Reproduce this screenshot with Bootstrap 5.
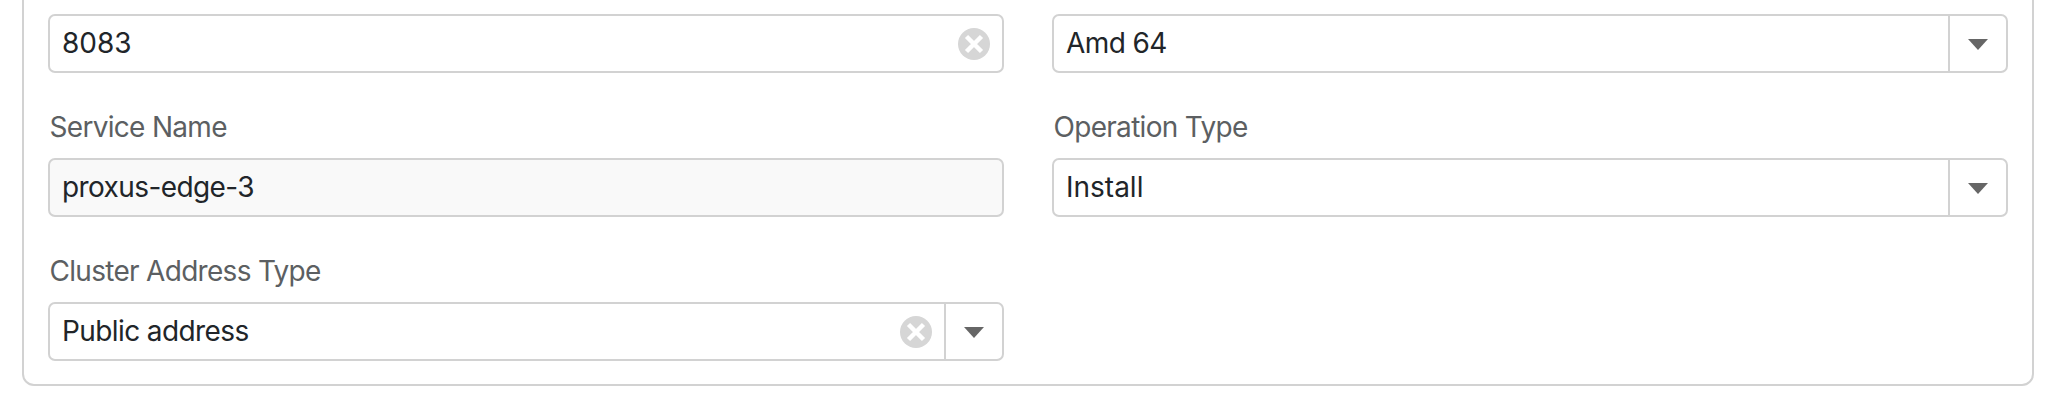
<!DOCTYPE html>
<html lang="en">
<head>
<meta charset="utf-8">
<title>Service form</title>
<link href="https://cdn.jsdelivr.net/npm/bootstrap@5.3.0/dist/css/bootstrap.min.css" rel="stylesheet">
<style>
html, body { height: 400px; overflow: hidden; background: #fff; }
body { font-family: Inter, "Liberation Sans", sans-serif; font-size: 28px; color: #212529; }
.form-shell { width: 2012px; margin: -40px 0 0 22px; padding: 52px 24px 23px 24px; border: 2px solid #d2d2d2; border-radius: 12px; background: #fff; }
.form-grid { --bs-gutter-x: 48px; --bs-gutter-y: 0; }
.field-label { display: block; font-size: 28px; line-height: 42px; color: #5c5f62; letter-spacing: -.7px; margin: 0 0 10px 1.5px; }
.field-box { display: flex; align-items: stretch; height: 59px; padding: 0; font-size: 28px; line-height: 1; color: #212529; background: #fff; border: 2px solid #d2d2d2; border-radius: 7px; }
.field-box.is-locked { background: #f9f9f9; }
.field-value { flex: 1 1 auto; align-self: center; padding-left: 12px; letter-spacing: -.6px; margin-top: -2px; }
.field-value.plain-spacing { letter-spacing: 0; }
.clear-slot { display: flex; align-items: center; padding-right: 12px; }
.clear-slot svg { width: 32px; height: 32px; display: block; }
.arrow-slot { flex: 0 0 58px; display: flex; align-items: center; justify-content: center; border-left: 2px solid #d2d2d2; padding-top: 2px; }
.arrow-slot svg { width: 20px; height: 11px; display: block; }
.field-row { margin-bottom: 33px; }
.field-row.is-last { margin-bottom: 0; }
</style>
</head>
<body>
<div class="form-shell">
  <div class="row form-grid field-row">
    <div class="col-6">
      <div class="field-box">
        <span class="field-value plain-spacing">8083</span>
        <span class="clear-slot"><svg viewBox="0 0 32 32"><circle cx="16" cy="16" r="16" fill="#d6d6d6"/><path d="M8.5 8.5L23.5 23.5M23.5 8.5L8.5 23.5" stroke="#fff" stroke-width="4.5" fill="none"/></svg></span>
      </div>
    </div>
    <div class="col-6">
      <div class="field-box">
        <span class="field-value">Amd 64</span>
        <span class="arrow-slot"><svg viewBox="0 0 20 11"><path d="M0 0H20L10 11Z" fill="#666"/></svg></span>
      </div>
    </div>
  </div>
  <div class="row form-grid field-row">
    <div class="col-6">
      <label class="field-label">Service Name</label>
      <div class="field-box is-locked">
        <span class="field-value">proxus-edge-3</span>
      </div>
    </div>
    <div class="col-6">
      <label class="field-label">Operation Type</label>
      <div class="field-box">
        <span class="field-value plain-spacing">Install</span>
        <span class="arrow-slot"><svg viewBox="0 0 20 11"><path d="M0 0H20L10 11Z" fill="#666"/></svg></span>
      </div>
    </div>
  </div>
  <div class="row form-grid field-row is-last">
    <div class="col-6">
      <label class="field-label">Cluster Address Type</label>
      <div class="field-box">
        <span class="field-value">Public address</span>
        <span class="clear-slot"><svg viewBox="0 0 32 32"><circle cx="16" cy="16" r="16" fill="#d6d6d6"/><path d="M8.5 8.5L23.5 23.5M23.5 8.5L8.5 23.5" stroke="#fff" stroke-width="4.5" fill="none"/></svg></span>
        <span class="arrow-slot"><svg viewBox="0 0 20 11"><path d="M0 0H20L10 11Z" fill="#666"/></svg></span>
      </div>
    </div>
  </div>
</div>
<script src="https://cdn.jsdelivr.net/npm/bootstrap@5.3.0/dist/js/bootstrap.bundle.min.js"></script>
</body>
</html>
